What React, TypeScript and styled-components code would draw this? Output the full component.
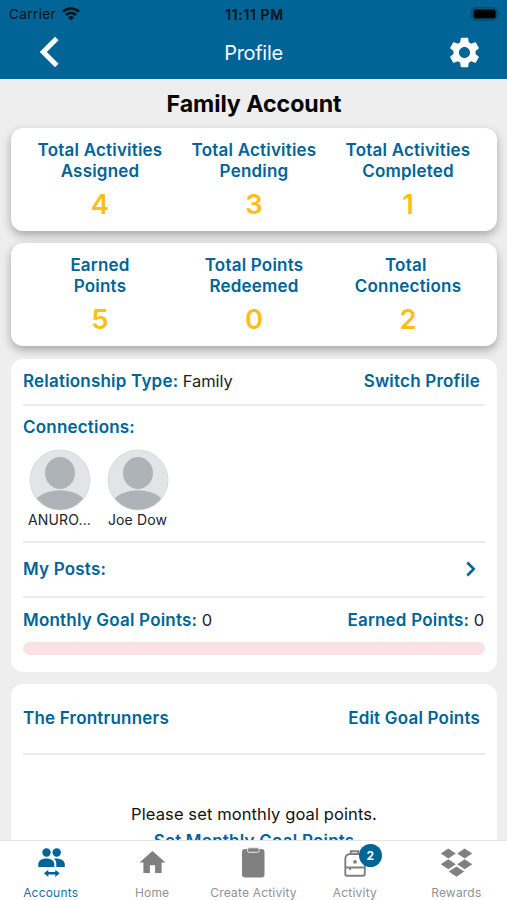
import React from "react";
import styled, { createGlobalStyle } from "styled-components";
import { MdSettings } from "react-icons/md";

const BLUE = "#006496";
const YELLOW = "#fdbf17";

const GlobalStyle = createGlobalStyle`
  * { box-sizing: border-box; }
  body { margin: 0; background: #eeeeee; font-family: Inter, "Liberation Sans", sans-serif; color: #111; }
`;

const Screen = styled.div`
  width: 507px;
  height: 900px;
  display: flex;
  flex-direction: column;
  overflow: hidden;
  background: #eeeeee;
`;

const Header = styled.header`
  flex: none;
  height: 79px;
  background: ${BLUE};
`;

const StatusBar = styled.div`
  height: 27px;
  display: grid;
  grid-template-columns: 1fr auto 1fr;
  align-items: center;
  padding: 1px 7px 0 9px;
  font-size: 13.5px;
  color: #0b1318;
`;

const Carrier = styled.div`
  display: flex;
  align-items: center;
  gap: 6px;
  letter-spacing: 0.4px;
`;

const Clock = styled.div`
  font-weight: 600;
  font-size: 14px;
  letter-spacing: 0.6px;
`;

const BatterySlot = styled.div`
  display: flex;
  justify-content: flex-end;
`;

const NavBar = styled.div`
  height: 52px;
  display: grid;
  grid-template-columns: 1fr auto 1fr;
  align-items: center;
  padding: 0 24px 0 39px;
`;

const NavTitle = styled.h1`
  margin: 0;
  font-size: 20px;
  font-weight: 400;
  line-height: 24px;
  letter-spacing: -0.3px;
  color: #f4fbff;
  transform: translate(-7.5px, 0);
`;

const NavButton = styled.button<{ $end?: boolean }>`
  border: 0;
  padding: 0 0 2px;
  background: none;
  color: #fff;
  display: flex;
  justify-content: ${(p) => (p.$end ? "flex-end" : "flex-start")};
`;

const Content = styled.main`
  flex: 1;
  min-height: 0;
  overflow: hidden;
  display: flex;
  flex-direction: column;
  gap: 12.3px;
  padding: 0 10px 0 11px;
`;

const AccountTitle = styled.h2`
  flex: none;
  margin: 0 0 -12.3px;
  height: 49px;
  line-height: 50px;
  text-align: center;
  font-size: 23.2px;
  font-weight: 700;
  letter-spacing: -0.05px;
  color: #050505;
`;

const StatsCard = styled.section`
  flex: none;
  height: 103px;
  display: grid;
  grid-template-columns: repeat(3, 1fr);
  padding: 12px 12px 0 12px;
  background: #fff;
  border-radius: 12px;
  box-shadow: 0 4px 10px rgba(0, 0, 0, 0.3);
`;

const Stat = styled.div`
  display: flex;
  flex-direction: column;
  align-items: center;
  text-align: center;
`;

const StatLabel = styled.div`
  white-space: pre-line;
  font-size: 17px;
  line-height: 21px;
  font-weight: 600;
  letter-spacing: 0.2px;
  color: ${BLUE};
`;

const StatValue = styled.div`
  font-size: 27.5px;
  line-height: 32px;
  margin-top: 6px;
  font-weight: 600;
  color: ${YELLOW};
`;

const Panel = styled.section<{ $height: number }>`
  flex: none;
  height: ${(p) => p.$height}px;
  padding: 0 12px;
  background: #fff;
  border-radius: 12px;
`;

const Row = styled.div<{ $height: number; $end?: number; $line?: boolean }>`
  height: ${(p) => p.$height}px;
  display: flex;
  align-items: center;
  justify-content: space-between;
  padding-right: ${(p) => p.$end ?? 0}px;
  border-bottom: ${(p) => (p.$line ? "2px solid #ebebeb" : "0")};
`;

const Label = styled.span`
  font-size: 17px;
  line-height: 20px;
  font-weight: 600;
  letter-spacing: 0.2px;
  color: ${BLUE};
`;

const Plain = styled.span`
  font-size: 16.5px;
  font-weight: 400;
  letter-spacing: -0.1px;
  color: #222;
`;

const Connections = styled.div`
  height: 137px;
  padding-top: 11px;
  border-bottom: 2px solid #ebebeb;
`;

const People = styled.div`
  display: flex;
  gap: 6px;
  margin: 12.5px 0 0 0.5px;
`;

const Person = styled.div`
  width: 72px;
  display: flex;
  flex-direction: column;
  align-items: center;
`;

const PersonName = styled.div`
  font-size: 14px;
  line-height: 18px;
  letter-spacing: 0.15px;
  color: #222;
  white-space: nowrap;
`;

const Progress = styled.div`
  height: 13px;
  border-radius: 7px;
  background: #fae0e7;
`;

const EmptyGoals = styled.div`
  padding-top: 48px;
  display: flex;
  flex-direction: column;
  align-items: center;
`;

const EmptyText = styled.p`
  margin: 0;
  font-size: 16.5px;
  line-height: 22px;
  letter-spacing: 0.1px;
  color: #111;
`;

const GoalLink = styled.div`
  margin-top: 6px;
  font-size: 17px;
  line-height: 20px;
  font-weight: 600;
  letter-spacing: 0.2px;
  color: ${BLUE};
`;

const TabBar = styled.nav`
  flex: none;
  height: 60px;
  border-top: 1px solid #e6e6e6;
  background: #fff;
  display: grid;
  grid-template-columns: repeat(5, 1fr);
`;

const Tab = styled.div<{ $active?: boolean }>`
  display: flex;
  flex-direction: column;
  align-items: center;
  color: ${(p) => (p.$active ? BLUE : "#808080")};
`;

const TabIcon = styled.div`
  position: relative;
  height: 43px;
  width: 60px;
  display: flex;
  justify-content: center;
  svg { display: block; flex: none; }
`;

const TabLabel = styled.div<{ $active?: boolean }>`
  font-size: 12px;
  line-height: 17px;
  letter-spacing: 0.2px;
  color: ${(p) => (p.$active ? "#1275a5" : "#929292")};
  white-space: nowrap;
`;

const Badge = styled.span`
  position: absolute;
  left: 34px;
  top: 3px;
  width: 23px;
  height: 23px;
  border-radius: 50%;
  background: ${BLUE};
  color: #fff;
  font-size: 12px;
  line-height: 23px;
  font-weight: 700;
  text-align: center;
`;

const WifiIcon = () => (
  <svg width="18" height="14" viewBox="0 0 18 14">
    <g fill="none" stroke="currentColor" strokeWidth="2.5">
      <path d="M1 4.7a11.5 11.5 0 0 1 16 0" />
      <path d="M4 8a7.2 7.2 0 0 1 10 0" />
    </g>
    <path d="M9 13.4 6 10.5a4.3 4.3 0 0 1 6 0z" fill="currentColor" />
  </svg>
);

const BatteryIcon = () => (
  <svg width="29" height="14" viewBox="0 0 29 14">
    <rect x="0.8" y="0.8" width="25" height="12.4" rx="4" fill="none" stroke="#07486b" strokeWidth="1.2" />
    <rect x="2.6" y="2.6" width="22" height="8.8" rx="2" fill="#000" />
    <path d="M27.2 5v4a2.3 2.3 0 0 0 0-4z" fill="#07486b" />
  </svg>
);

const BackIcon = () => (
  <svg width="21" height="32" viewBox="0 0 21 32">
    <path d="M17.8 2.5 4.3 16l13.5 13.5" fill="none" stroke="currentColor" strokeWidth="5" />
  </svg>
);

const ChevronIcon = () => (
  <svg width="10" height="16" viewBox="0 0 10 16">
    <path d="M1.3 1.5 7.8 8l-6.5 6.5" fill="none" stroke={BLUE} strokeWidth="2.5" />
  </svg>
);

const Avatar = () => (
  <svg width="62" height="62" viewBox="0 0 62 62">
    <defs>
      <clipPath id="avatar-clip">
        <circle cx="31" cy="31" r="29.7" />
      </clipPath>
    </defs>
    <circle cx="31" cy="31" r="30" fill="#e2e5e7" stroke="#d9dbdc" strokeWidth="1" />
    <g clipPath="url(#avatar-clip)" fill="#aeb3b7">
      <ellipse cx="31" cy="24" rx="15" ry="16" />
      <ellipse cx="31" cy="61" rx="29" ry="19.8" />
    </g>
  </svg>
);

const AccountsIcon = () => (
  <svg width="28" height="38" viewBox="0 0 28 38" fill="currentColor">
    <circle cx="9.5" cy="11.5" r="4.2" />
    <circle cx="19.7" cy="11.5" r="4.2" />
    <path d="M1.3 26v-2.500c0-4 3.500-6 8-6s8 2 8 6V26z" />
    <path d="M17 17.600c5.500-.6 10.800 1.400 10.800 5.900V26h-8.500v-2.500c0-2.500-.8-4.500-2.300-5.900z" />
    <path d="M7 32.300 11.300 28.700v2.400h7v-2.400l4.400 3.600-4.400 3.700v-2.500h-7V36z" />
  </svg>
);

const HomeIcon = () => (
  <svg width="31" height="38" viewBox="0 0 31 38" fill="currentColor">
    <path d="M12.900 32v-7.800h5.200V32h6.500V21.600h3.900L15.500 10 2.500 21.600h3.900V32z" />
  </svg>
);

const ClipboardIcon = () => (
  <svg width="24" height="38" viewBox="0 0 24 38">
    <rect x="1" y="8" width="22.500" height="28.500" rx="3" fill="currentColor" />
    <rect x="6.500" y="6.800" width="11.500" height="4.500" rx="1.500" fill="currentColor" stroke="#e8e8e8" strokeWidth="1" />
  </svg>
);

const BackpackIcon = () => (
  <svg width="24" height="38" viewBox="0 0 24 38" fill="none" stroke="currentColor" strokeWidth="1.900">
    <path d="M2.300 33.500V18c0-3.200 2-5 5-5h8c4 0 6.500 2 6.500 5v14.500c0 1.500-.8 2.300-2.300 2.300h-16c-.8 0-1.200-.5-1.200-1.300zM7.800 13v-2.700h7.500V13M2.300 26.500h19.500M7 26.500v2.500" />
    <circle cx="12" cy="20.800" r="1.900" fill="currentColor" stroke="none" />
  </svg>
);

const RewardsIcon = () => (
  <svg width="33" height="38" viewBox="0 0 33 38" fill="currentColor">
    <path d="M8.300 7.600 15.800 12.600 8.300 17.600.8 12.600zM24.700 7.600 32.200 12.600 24.700 17.600 17.200 12.600zM8.300 18.300 15.800 23.300 8.300 28.300.8 23.300zM24.700 18.300 32.200 23.300 24.700 28.300 17.200 23.300zM16.500 25.500 24.200 30.600 16.500 35.800 8.800 30.600z" />
  </svg>
);

type StatItem = { label: string; value: number };

const activityStats: StatItem[] = [
  { label: "Total Activities\nAssigned", value: 4 },
  { label: "Total Activities\nPending", value: 3 },
  { label: "Total Activities\nCompleted", value: 1 },
];

const pointStats: StatItem[] = [
  { label: "Earned\nPoints", value: 5 },
  { label: "Total Points\nRedeemed", value: 0 },
  { label: "Total\u00a0\nConnections", value: 2 },
];

const tabs = [
  { label: "Accounts", icon: <AccountsIcon />, active: true },
  { label: "Home", icon: <HomeIcon /> },
  { label: "Create Activity", icon: <ClipboardIcon /> },
  { label: "Activity", icon: <BackpackIcon />, badge: 2 },
  { label: "Rewards", icon: <RewardsIcon /> },
];

const Stats = ({ items }: { items: StatItem[] }) => (
  <StatsCard>
    {items.map((s) => (
      <Stat key={s.label}>
        <StatLabel>{s.label}</StatLabel>
        <StatValue>{s.value}</StatValue>
      </Stat>
    ))}
  </StatsCard>
);

export default function App() {
  return (
    <Screen>
      <GlobalStyle />
      <Header>
        <StatusBar>
          <Carrier>
            Carrier <WifiIcon />
          </Carrier>
          <Clock>11:11 PM</Clock>
          <BatterySlot>
            <BatteryIcon />
          </BatterySlot>
        </StatusBar>
        <NavBar>
          <NavButton aria-label="Back">
            <BackIcon />
          </NavButton>
          <NavTitle>Profile</NavTitle>
          <NavButton $end aria-label="Settings">
            <MdSettings size={37} />
          </NavButton>
        </NavBar>
      </Header>

      <Content>
        <AccountTitle>Family Account</AccountTitle>
        <Stats items={activityStats} />
        <Stats items={pointStats} />

        <Panel $height={313}>
          <Row $height={47} $end={5} $line>
            <Label>
              Relationship Type: <Plain>Family</Plain>
            </Label>
            <Label>Switch Profile</Label>
          </Row>
          <Connections>
            <Label>Connections:</Label>
            <People>
              {["ANURO...", "Joe Dow"].map((name) => (
                <Person key={name}>
                  <Avatar />
                  <PersonName>{name}</PersonName>
                </Person>
              ))}
            </People>
          </Connections>
          <Row $height={55} $end={9} $line>
            <Label>My Posts:</Label>
            <ChevronIcon />
          </Row>
          <Row $height={44} $end={1}>
            <Label>
              Monthly Goal Points: <Plain>0</Plain>
            </Label>
            <Label>
              Earned Points: <Plain>0</Plain>
            </Label>
          </Row>
          <Progress />
        </Panel>

        <Panel $height={260}>
          <Row $height={71} $end={5} $line>
            <Label>The Frontrunners</Label>
            <Label>Edit Goal Points</Label>
          </Row>
          <EmptyGoals>
            <EmptyText>Please set monthly goal points.</EmptyText>
            <GoalLink>Set Monthly Goal Points</GoalLink>
          </EmptyGoals>
        </Panel>
      </Content>

      <TabBar>
        {tabs.map((t) => (
          <Tab key={t.label} $active={t.active}>
            <TabIcon>
              {t.icon}
              {t.badge && <Badge>{t.badge}</Badge>}
            </TabIcon>
            <TabLabel $active={t.active}>{t.label}</TabLabel>
          </Tab>
        ))}
      </TabBar>
    </Screen>
  );
}
